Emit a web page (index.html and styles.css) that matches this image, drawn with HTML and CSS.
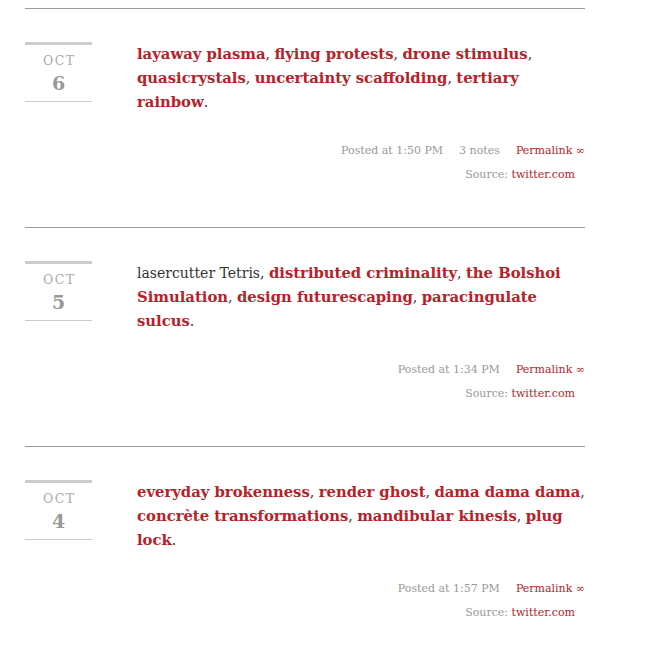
FILE: index.html
```html
<!DOCTYPE html>
<html>
<head>
<meta charset="utf-8">
<link rel="stylesheet" href="styles.css">
</head>
<body>
<div class="posts">
  <article class="post">
    <div class="date"><span class="month">Oct</span><span class="day">6</span></div>
    <div class="body">
      <p class="text"><a href="#">layaway plasma</a>, <a href="#">flying protests</a>, <a href="#">drone stimulus</a>, <a href="#">quasicrystals</a>, <a href="#">uncertainty scaffolding</a>, <a href="#">tertiary rainbow</a>.</p>
      <div class="meta">
        <div class="meta-row"><span>Posted at 1:50 PM</span><span>3 notes</span><a href="#">Permalink ∞</a></div>
        <div class="meta-row source">Source: <a href="#">twitter.com</a></div>
      </div>
    </div>
  </article>
  <article class="post">
    <div class="date"><span class="month">Oct</span><span class="day">5</span></div>
    <div class="body">
      <p class="text">lasercutter Tetris, <a href="#">distributed criminality</a>, <a href="#">the Bolshoi Simulation</a>, <a href="#">design futurescaping</a>, <a href="#">paracingulate sulcus</a>.</p>
      <div class="meta">
        <div class="meta-row"><span>Posted at 1:34 PM</span><a href="#">Permalink ∞</a></div>
        <div class="meta-row source">Source: <a href="#">twitter.com</a></div>
      </div>
    </div>
  </article>
  <article class="post">
    <div class="date"><span class="month">Oct</span><span class="day">4</span></div>
    <div class="body">
      <p class="text"><a href="#">everyday brokenness</a>, <a href="#">render ghost</a>, <a href="#">dama dama dama</a>, <a href="#">concrète transformations</a>, <a href="#">mandibular kinesis</a>, <a href="#">plug lock</a>.</p>
      <div class="meta">
        <div class="meta-row"><span>Posted at 1:57 PM</span><a href="#">Permalink ∞</a></div>
        <div class="meta-row source">Source: <a href="#">twitter.com</a></div>
      </div>
    </div>
  </article>
</div>
</body>
</html>
```
FILE: styles.css
```css
html, body { margin: 0; padding: 0; background: #fff; }
body { font-family: "DejaVu Serif", serif; color: #333; }
.posts { margin-left: 25px; width: 560px; }
.post {
  display: flex;
  align-items: flex-start;
  border-top: 1px solid #999;
  padding: 33px 0 40px;
}
.post:first-child { margin-top: 8px; }
.date {
  width: 67px;
  flex: none;
  border-top: 3px solid #ccc;
  border-bottom: 1px solid #ccc;
  display: flex;
  flex-direction: column;
  align-items: center;
  padding: 7px 0 3px;
  height: 46px;
}
.month {
  font-family: "DejaVu Serif", serif;
  text-transform: uppercase;
  font-size: 12.5px;
  letter-spacing: 1.5px;
  padding-left: 1.5px;
  color: #aaa;
  line-height: 18px;
}
.day {
  font-family: "DejaVu Serif", serif;
  font-weight: bold;
  font-size: 19px;
  color: #999;
  line-height: 26px;
}
.body { margin-left: 45px; flex: 1; }
.text {
  margin: 0;
  font-family: "DejaVu Serif", serif;
  font-size: 14px;
  line-height: 24px;
  color: #333;
}
.text a { color: #b5222a; font-weight: bold; font-size: 14.8px; text-decoration: none; }
.meta {
  margin-top: 25px;
  font-family: "DejaVu Serif", serif;
  font-size: 11px;
  line-height: 24px;
  color: #999;
  display: flex;
  flex-direction: column;
  align-items: flex-end;
}
.meta a { color: #b5222a; text-decoration: none; }
.meta-row { display: flex; gap: 16px; }
.meta-row.source { display: block; margin-right: 10px; }
```
